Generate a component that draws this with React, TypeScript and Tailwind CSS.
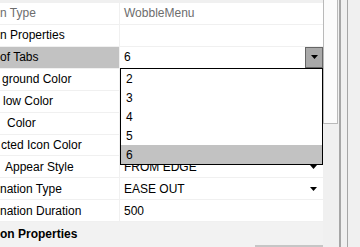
import React from 'react';

type Row = {
	label: string;
	pad: string;
	value?: string;
	dim?: boolean;
	selected?: boolean;
	combo?: boolean;
	arrow?: boolean;
};

const rows: Row[] = [
	{ label: 'n Type', pad: 'pl-0', value: 'WobbleMenu', dim: true },
	{ label: 'n Properties', pad: 'pl-0' },
	{ label: 'of Tabs', pad: 'pl-0', value: '6', selected: true, combo: true },
	{ label: 'ground Color', pad: 'pl-[2px]' },
	{ label: 'low Color', pad: 'pl-[3px]' },
	{ label: 'Color', pad: 'pl-[7px]' },
	{ label: 'cted Icon Color', pad: 'pl-[1px]' },
	{ label: 'Appear Style', pad: 'pl-[5px]', value: 'FROM EDGE', arrow: true },
	{ label: 'nation Type', pad: 'pl-0', value: 'EASE OUT', arrow: true },
	{ label: 'nation Duration', pad: 'pl-0', value: '500' },
];

const options = ['2', '3', '4', '5', '6'];

// маленький чёрный треугольник, как у WinForms
function Arrow() {
	return (
		<svg width="7" height="4" viewBox="0 0 7 4" className="block">
			<path d="M0 0H7L3.5 4Z" fill="#000" />
		</svg>
	);
}

export default function App() {
	return (
		<div
			className="relative flex w-[360px] h-[247px] overflow-hidden bg-[#f0f0f0] text-[12px] leading-none text-black"
			style={{ fontFamily: '"Liberation Sans", Arial, sans-serif' }}
		>
			{/* сетка свойств */}
			<div className="relative flex flex-col w-[323px] shrink-0">
				<div className="h-[3px] bg-[#f0f0f0]" />
				{rows.map((r, i) => (
					<div key={i} className="flex h-[22px] border-b border-[#f0f0f0] bg-white">
						<div
							className={`w-[120px] shrink-0 flex items-center border-r border-[#f0f0f0] whitespace-nowrap overflow-hidden ${r.pad} ${
								r.selected ? 'bg-[#c2c2c2]' : ''
							} ${r.dim ? 'text-[#6d6d6d]' : ''}`}
						>
							{r.label}
						</div>
						<div className={`flex-1 flex items-center pl-[4px] ${r.dim ? 'text-[#6d6d6d]' : ''}`}>
							<span className="flex-1">{r.value}</span>
							{r.combo && (
								<div className="w-[18px] h-[21px] bg-[#a9a9a9] border border-[#656565] flex items-center justify-center">
									<Arrow />
								</div>
							)}
							{r.arrow && (
								<div className="w-[18px] flex justify-center pr-[1px]">
									<Arrow />
								</div>
							)}
						</div>
					</div>
				))}
				<div className="h-[23px] bg-[#f2f2f2] flex items-center font-bold">on Properties</div>
				<div className="flex h-[2px] bg-[#f2f2f2]">
					<div className="w-[255px]" />
					<div className="flex-1 bg-[#c6c6c6]" />
				</div>

				{/* выпадающий список */}
				<div className="absolute left-[120px] top-[68px] w-[203px] border border-black bg-white">
					{options.map((o) => (
						<div
							key={o}
							className={`h-[19px] flex items-center pl-[5px] ${o === '6' ? 'bg-[#c2c2c2]' : ''}`}
						>
							{o}
						</div>
					))}
				</div>
			</div>

			{/* полоса прокрутки */}
			<div className="flex flex-1">
				<div className="w-[15px] h-[124px] bg-[#fbfbfb] border border-[#b9b9b9] border-t-0" />
				<div className="w-[1px]" />
				<div className="w-[2px] bg-[#a6a6a6]" />
				<div className="w-[6px]" />
				<div className="w-[1px] bg-[#a6a6a6]" />
				<div className="flex-1" />
			</div>
		</div>
	);
}
